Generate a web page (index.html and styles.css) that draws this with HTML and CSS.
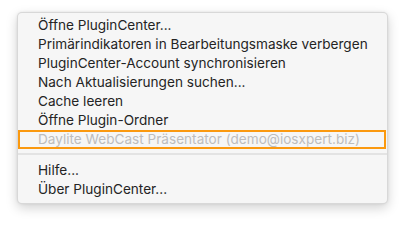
FILE: index.html
```html
<!DOCTYPE html>
<html lang="de">
<head>
<meta charset="utf-8">
<link rel="stylesheet" href="styles.css">
</head>
<body>
<div class="menu">
  <div class="item">Öffne PluginCenter...</div>
  <div class="item">Primärindikatoren in Bearbeitungsmaske verbergen</div>
  <div class="item">PluginCenter-Account synchronisieren</div>
  <div class="item">Nach Aktualisierungen suchen...</div>
  <div class="item">Cache leeren</div>
  <div class="item">Öffne Plugin-Ordner</div>
  <div class="item disabled highlight">Daylite WebCast Präsentator (demo@iosxpert.biz)</div>
  <div class="separator"></div>
  <div class="item">Hilfe...</div>
  <div class="item">Über PluginCenter...</div>
</div>
</body>
</html>
```
FILE: styles.css
```css
html, body {
  margin: 0;
  padding: 0;
  background: #ffffff;
}
body {
  width: 404px;
  height: 225px;
  overflow: hidden;
  font-family: "Inter", "Roboto", "Liberation Sans", sans-serif;
}
.menu {
  margin: 12px 0 0 17px;
  width: 371px;
  box-sizing: border-box;
  padding: 3px 0 4px;
  background: #f6f6f6;
  border: 1px solid rgba(0, 0, 0, 0.12);
  border-radius: 5px;
  box-shadow: 0 4px 12px rgba(0, 0, 0, 0.18), 0 0 3px rgba(0, 0, 0, 0.08);
}
.item {
  height: 19px;
  line-height: 19px;
  padding-left: 20px;
  font-size: 13.6px;
  color: #242424;
  white-space: nowrap;
  box-sizing: border-box;
}
.disabled {
  color: #bdbdbd;
}
.highlight {
  box-shadow: inset 0 0 0 2px #fb990f;
  margin-right: 1px;
}
.separator {
  height: 2px;
  background: #e3e3e3;
  margin: 4px 0 6px;
}
```
